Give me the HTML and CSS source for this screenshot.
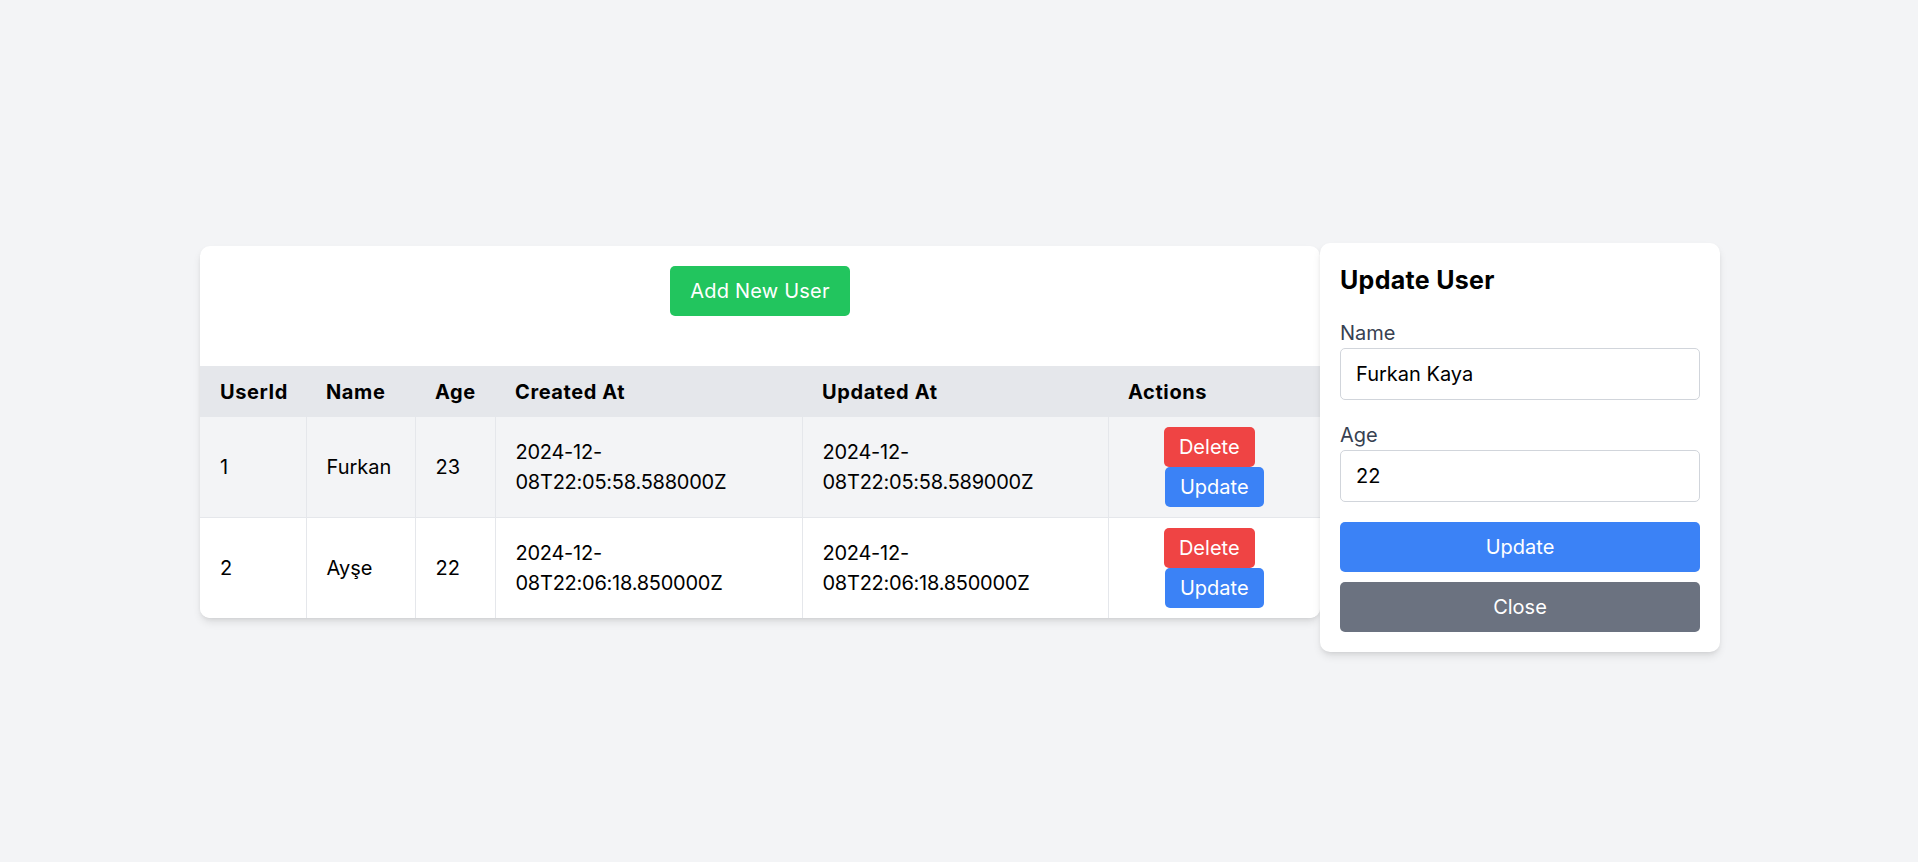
FILE: index.html
```html
<!DOCTYPE html>
<html lang="en">
<head>
<meta charset="utf-8">
<title>Users</title>
<link rel="stylesheet" href="styles.css">
</head>
<body>
<div class="page">
  <div class="card">
    <div class="card-top">
      <button class="btn btn-add">Add New User</button>
    </div>
    <table class="users">
      <colgroup>
        <col class="c-id"><col class="c-name"><col class="c-age"><col class="c-created"><col class="c-updated"><col class="c-actions">
      </colgroup>
      <thead>
        <tr>
          <th>UserId</th>
          <th>Name</th>
          <th>Age</th>
          <th>Created At</th>
          <th>Updated At</th>
          <th>Actions</th>
        </tr>
      </thead>
      <tbody>
        <tr class="row-odd">
          <td>1</td>
          <td>Furkan</td>
          <td>23</td>
          <td class="date">2024-12-08T22:05:58.588000Z</td>
          <td class="date">2024-12-08T22:05:58.589000Z</td>
          <td class="actions">
            <div class="action-stack">
              <button class="btn btn-sm btn-delete">Delete</button>
              <button class="btn btn-sm btn-update">Update</button>
            </div>
          </td>
        </tr>
        <tr class="row-even">
          <td>2</td>
          <td>Ayşe</td>
          <td>22</td>
          <td class="date">2024-12-08T22:06:18.850000Z</td>
          <td class="date">2024-12-08T22:06:18.850000Z</td>
          <td class="actions">
            <div class="action-stack">
              <button class="btn btn-sm btn-delete">Delete</button>
              <button class="btn btn-sm btn-update">Update</button>
            </div>
          </td>
        </tr>
      </tbody>
    </table>
  </div>
  <div class="panel">
    <h2 class="panel-title">Update User</h2>
    <div class="field">
      <label class="field-label" for="name">Name</label>
      <input class="field-input" id="name" type="text" value="Furkan Kaya">
    </div>
    <div class="field">
      <label class="field-label" for="age">Age</label>
      <input class="field-input" id="age" type="text" value="22">
    </div>
    <button class="btn btn-block btn-primary">Update</button>
    <button class="btn btn-block btn-secondary">Close</button>
  </div>
</div>
</body>
</html>
```
FILE: styles.css
```css
* { box-sizing: border-box; }

html, body {
  margin: 0;
  padding: 0;
}

body {
  background: #f3f4f6;
  font-family: Inter, "Noto Sans", sans-serif;
  font-size: 20px;
  line-height: 30px;
  color: #000;
}

.page {
  display: flex;
  justify-content: center;
  align-items: flex-start;
  padding-top: 243px;
  padding-left: 2px;
  min-height: 862px;
}

.card {
  width: 1120px;
  margin-top: 3px;
  background: #fff;
  border-radius: 10px;
  overflow: hidden;
  box-shadow: 0 5px 8px -1px rgba(0,0,0,0.1), 0 2px 5px -2px rgba(0,0,0,0.1);
}

.card-top {
  padding: 20px 20px 50px;
  text-align: center;
}

.btn {
  font-family: inherit;
  font-size: 20px;
  line-height: 30px;
  color: #fff;
  border: none;
  border-radius: 5px;
  cursor: pointer;
  margin: 0;
}

.btn-add {
  background: #22c55e;
  padding: 10px 20px;
  letter-spacing: 0.2px;
}

.users {
  width: 100%;
  border-collapse: collapse;
  table-layout: fixed;
}

.c-id { width: 106px; }
.c-name { width: 109px; }
.c-age { width: 80px; }
.c-created { width: 307px; }
.c-updated { width: 306px; }
.c-actions { width: 212px; }

.users th {
  background: #e5e7eb;
  text-align: left;
  font-weight: 700;
  letter-spacing: 0.6px;
  padding: 10px 20px;
  height: 51px;
}

.users td {
  padding: 20px;
  vertical-align: middle;
  border-left: 1px solid #e5e7eb;
}

.users td:first-child { border-left: none; }

.users td.date {
  letter-spacing: -0.25px;
}

.row-odd { background: #f3f4f6; }
.row-even { background: #fff; border-top: 1px solid #e5e7eb; }

.users td.actions {
  padding: 10px 20px;
}

.action-stack {
  display: flex;
  flex-direction: column;
  align-items: center;
}

.btn-sm {
  padding: 5px 15px;
}

.btn-delete {
  background: #ef4444;
  margin-right: 10px;
}

.btn-update {
  background: #3b82f6;
}

.panel {
  width: 400px;
  background: #fff;
  border-radius: 10px;
  padding: 20px;
  box-shadow: 0 5px 8px -1px rgba(0,0,0,0.1), 0 2px 5px -2px rgba(0,0,0,0.1);
}

.panel-title {
  margin: 0 0 20px;
  font-size: 25px;
  line-height: 35px;
  font-weight: 700;
  letter-spacing: 0.3px;
}

.field {
  margin-bottom: 20px;
}

.field-label {
  display: block;
  color: #374151;
}

.field-input {
  display: block;
  width: 100%;
  height: 52px;
  padding: 10px 15px;
  border: 1px solid #d1d5db;
  border-radius: 5px;
  font-family: inherit;
  font-size: 20px;
  line-height: 30px;
  color: #000;
  background: #fff;
}

.btn-block {
  display: block;
  width: 100%;
  padding: 10px 0;
  text-align: center;
}

.btn-primary {
  background: #3b82f6;
  margin-bottom: 10px;
}

.btn-secondary {
  background: #6b7280;
}
```
